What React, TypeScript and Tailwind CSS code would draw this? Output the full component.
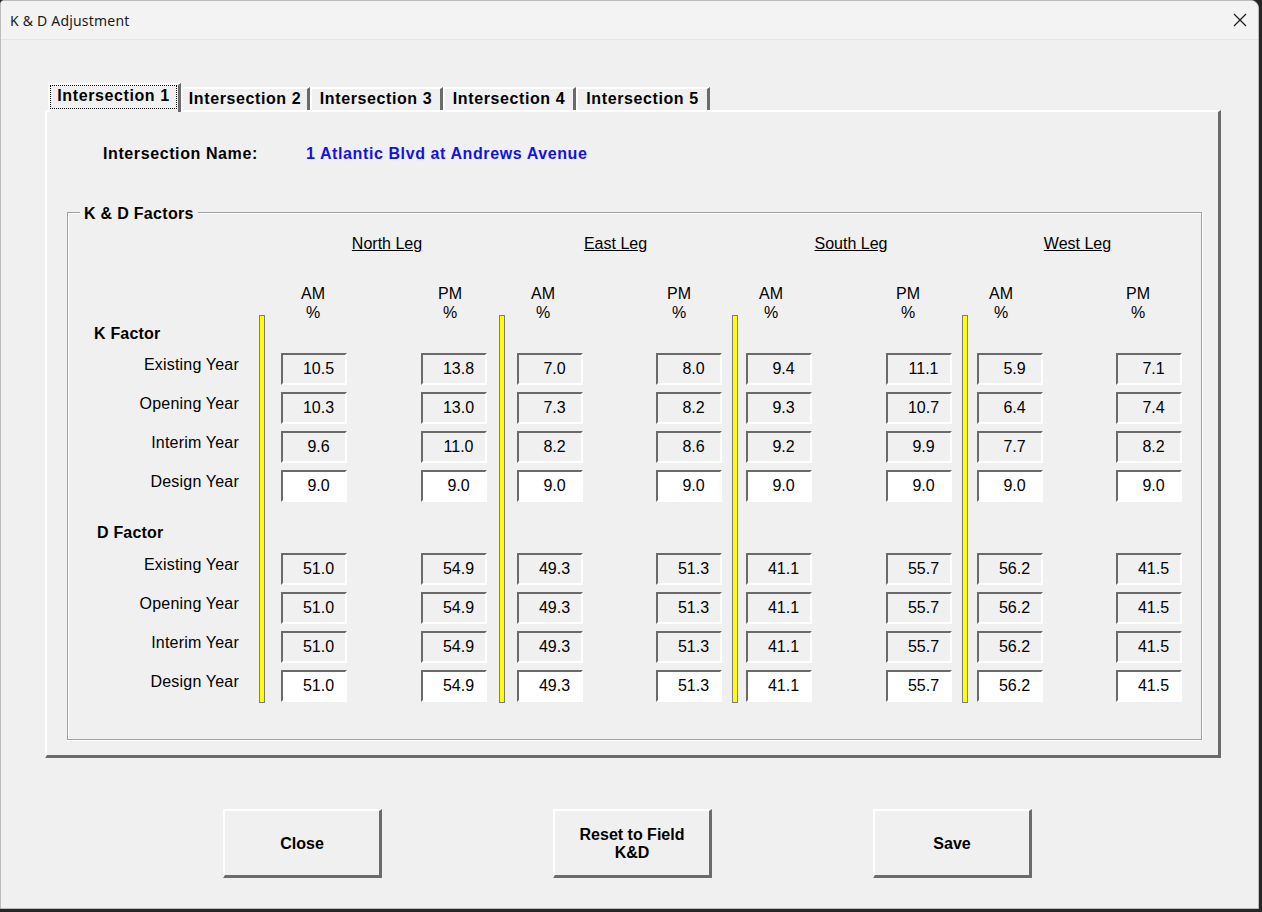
import React from 'react';

type Leg = {
  name: string;
  barMl: string;
  amMl: string;
  pmMl: string;
  amHead: string;
  pmHead: string;
  legHead: string;
  kAm: string[];
  kPm: string[];
  dAm: string;
  dPm: string;
};

const legs: Leg[] = [
  { name: 'North Leg', barMl: 'ml-0', amMl: 'ml-[16px]', pmMl: 'ml-[74px]', amHead: 'pr-[2px]', pmHead: 'pr-[8px]', legHead: 'pl-[6px]', kAm: ['10.5', '10.3', '9.6', '9.0'], kPm: ['13.8', '13.0', '11.0', '9.0'], dAm: '51.0', dPm: '54.9' },
  { name: 'East Leg', barMl: 'ml-[12px]', amMl: 'ml-[12px]', pmMl: 'ml-[73px]', amHead: 'pr-[14px]', pmHead: 'pr-[20px]', legHead: 'pr-[8px]', kAm: ['7.0', '7.3', '8.2', '9.0'], kPm: ['8.0', '8.2', '8.6', '9.0'], dAm: '49.3', dPm: '51.3' },
  { name: 'South Leg', barMl: 'ml-[10px]', amMl: 'ml-[8px]', pmMl: 'ml-[74px]', amHead: 'pr-[16px]', pmHead: 'pr-[22px]', legHead: 'pl-[4px]', kAm: ['9.4', '9.3', '9.2', '9.0'], kPm: ['11.1', '10.7', '9.9', '9.0'], dAm: '41.1', dPm: '55.7' },
  { name: 'West Leg', barMl: 'ml-[10px]', amMl: 'ml-[9px]', pmMl: 'ml-[73px]', amHead: 'pr-[18px]', pmHead: 'pr-[22px]', legHead: 'pr-[4px]', kAm: ['5.9', '6.4', '7.7', '9.0'], kPm: ['7.1', '7.4', '8.2', '9.0'], dAm: '56.2', dPm: '41.5' },
];

const years = ['Existing Year', 'Opening Year', 'Interim Year', 'Design Year'];
const tabs = [
  { label: 'Intersection 1', w: 'w-[133px]' },
  { label: 'Intersection 2', w: 'w-[129px]' },
  { label: 'Intersection 3', w: 'w-[133px]' },
  { label: 'Intersection 4', w: 'w-[133px]' },
  { label: 'Intersection 5', w: 'w-[134px]' },
];

function Box({ value, editable }: { value: string; editable?: boolean }) {
  return (
    <div
      className={`w-[66px] h-[32px] mb-[7px] pl-[9px] border-t-2 border-l-2 border-r-2 border-b-2 border-t-[#6a6a6a] border-l-[#6a6a6a] border-r-white border-b-white text-center leading-[28px] text-[16px] ${
        editable ? 'bg-white' : 'bg-[#f0f0f0]'
      }`}
    >
      {value}
    </div>
  );
}

function ValueColumn({ head, headPad, ml, k, d }: { head: string; headPad: string; ml: string; k: string[]; d: string }) {
  return (
    <div className={`flex flex-col w-[66px] ${ml}`}>
      <div className={`mt-[30px] h-[32px] pt-[1px] leading-[19px] text-center text-[16px] ${headPad}`}>
        {head}
        <br />%
      </div>
      <div className="h-[38px]" />
      {k.map((v, i) => (
        <Box key={i} value={v} editable={i === 3} />
      ))}
      <div className="h-[44px]" />
      {[0, 1, 2, 3].map((i) => (
        <Box key={i} value={d} editable={i === 3} />
      ))}
    </div>
  );
}

function LegGroup({ leg }: { leg: Leg }) {
  return (
    <div className="flex">
      <div className={`flex flex-col pt-[82px] ${leg.barMl}`}>
        <div className="w-[6px] h-[388px] border border-[#7c7c7c] bg-[#ffff00]" />
      </div>
      <div className={`flex flex-col ${leg.amMl}`}>
        <div className={`h-[20px] pt-[1px] leading-[20px] text-center text-[16px] ${leg.legHead}`}>
          <span className="underline">{leg.name}</span>
        </div>
        <div className="flex">
          <ValueColumn head="AM" headPad={leg.amHead} ml="ml-0" k={leg.kAm} d={leg.dAm} />
          <ValueColumn head="PM" headPad={leg.pmHead} ml={leg.pmMl} k={leg.kPm} d={leg.dPm} />
        </div>
      </div>
    </div>
  );
}

function Button({ children, ml }: { children: React.ReactNode; ml: string }) {
  return (
    <div
      className={`w-[159px] h-[69px] ${ml} pt-[2px] flex items-center justify-center text-center font-bold text-[16px] leading-[18px] border-t-2 border-l-2 border-t-white border-l-white border-r-[3px] border-b-[3px] border-r-[#6b6b6b] border-b-[#6b6b6b]`}
    >
      {children}
    </div>
  );
}

export default function App() {
  return (
    <div className="w-[1262px] h-[912px] bg-[#262626] font-['Liberation_Sans',Arial,sans-serif] text-black overflow-hidden">
      <div className="w-[1259px] h-[909px] flex flex-col bg-[#f0f0f0] rounded-tl-[4px] rounded-tr-[8px] border border-[#bcbcbc] overflow-hidden">
        {/* title bar */}
        <div className="h-[39px] flex items-center justify-between bg-[#f3f3f3] border-b border-[#e4e4e4] shrink-0">
          <span className="pl-[9px] text-[14px] tracking-[0.2px] font-['Noto_Sans',sans-serif] text-[#1a1a1a]">K &amp; D Adjustment</span>
          <svg className="mr-[11px]" width="14" height="14" viewBox="0 0 14 14">
            <path d="M1 1 L13 13 M13 1 L1 13" stroke="#1a1a1a" strokeWidth="1.2" fill="none" />
          </svg>
        </div>

        <div className="flex flex-col pl-[44px] pt-[43px]">
          {/* tabs */}
          <div className="flex items-end ml-[3px] h-[27px] relative z-10">
            {tabs.map((t, i) =>
              i === 0 ? (
                <div
                  key={t.label}
                  className={`${t.w} h-[29px] -mb-[2px] bg-[#f0f0f0] border-t-2 border-l-2 border-t-white border-l-white border-r-[3px] border-r-[#6b6b6b] pr-[1px]`}
                >
                  <div className="h-[24px] pb-[2px] border border-dotted border-black flex items-center justify-center font-bold text-[16px] tracking-[0.6px]">
                    {t.label}
                  </div>
                </div>
              ) : (
                <div
                  key={t.label}
                  className={`${t.w} h-[23px] pb-[1px] border-t-2 border-l-2 border-t-white border-l-white border-r-[3px] border-r-[#6b6b6b] flex items-center justify-center font-bold text-[16px] tracking-[0.6px]`}
                >
                  {t.label}
                </div>
              )
            )}
          </div>

          {/* panel */}
          <div className="w-[1176px] h-[648px] border-t-2 border-l-2 border-t-white border-l-white border-r-[3px] border-b-[3px] border-r-[#6b6b6b] border-b-[#6b6b6b] flex flex-col">
            <div className="flex pl-[56px] pt-[32px] h-[51px] leading-[20px] text-[16px] font-bold tracking-[0.6px]">
              <span className="w-[203px]">Intersection Name:</span>
              <span className="text-[#1212e6]">1 Atlantic Blvd at Andrews Avenue</span>
            </div>

            {/* frame */}
            <div className="relative ml-[20px] mt-[49px] w-[1135px] h-[528px] border border-[#a0a0a0] shadow-[1px_1px_0_#ffffff,inset_1px_1px_0_#ffffff] pt-[20px] flex">
              <div className="absolute left-[12px] -top-[9px] px-[4px] bg-[#f0f0f0] font-bold text-[16px] leading-[20px] tracking-[0.3px]">
                K &amp; D Factors
              </div>

              {/* row labels */}
              <div className="w-[191px] flex flex-col text-[16px] shrink-0">
                <div className="h-[82px]" />
                <div className="h-[38px] pt-[9px] pl-[26px] leading-[20px] font-bold tracking-[0.2px]">K Factor</div>
                {years.map((y) => (
                  <div key={y} className="h-[32px] mb-[7px] pt-[2px] pr-[20px] leading-[20px] text-right tracking-[0.2px]">
                    {y}
                  </div>
                ))}
                <div className="h-[44px] pt-[14px] pl-[29px] leading-[20px] font-bold tracking-[0.2px]">D Factor</div>
                {years.map((y) => (
                  <div key={y} className="h-[32px] mb-[7px] pt-[2px] pr-[20px] leading-[20px] text-right tracking-[0.2px]">
                    {y}
                  </div>
                ))}
              </div>

              {legs.map((leg) => (
                <LegGroup key={leg.name} leg={leg} />
              ))}
            </div>
          </div>

          {/* buttons */}
          <div className="flex mt-[51px]">
            <Button ml="ml-[178px]">Close</Button>
            <Button ml="ml-[171px]">
              Reset to Field
              <br />
              K&amp;D
            </Button>
            <Button ml="ml-[161px]">Save</Button>
          </div>
        </div>
      </div>
    </div>
  );
}
